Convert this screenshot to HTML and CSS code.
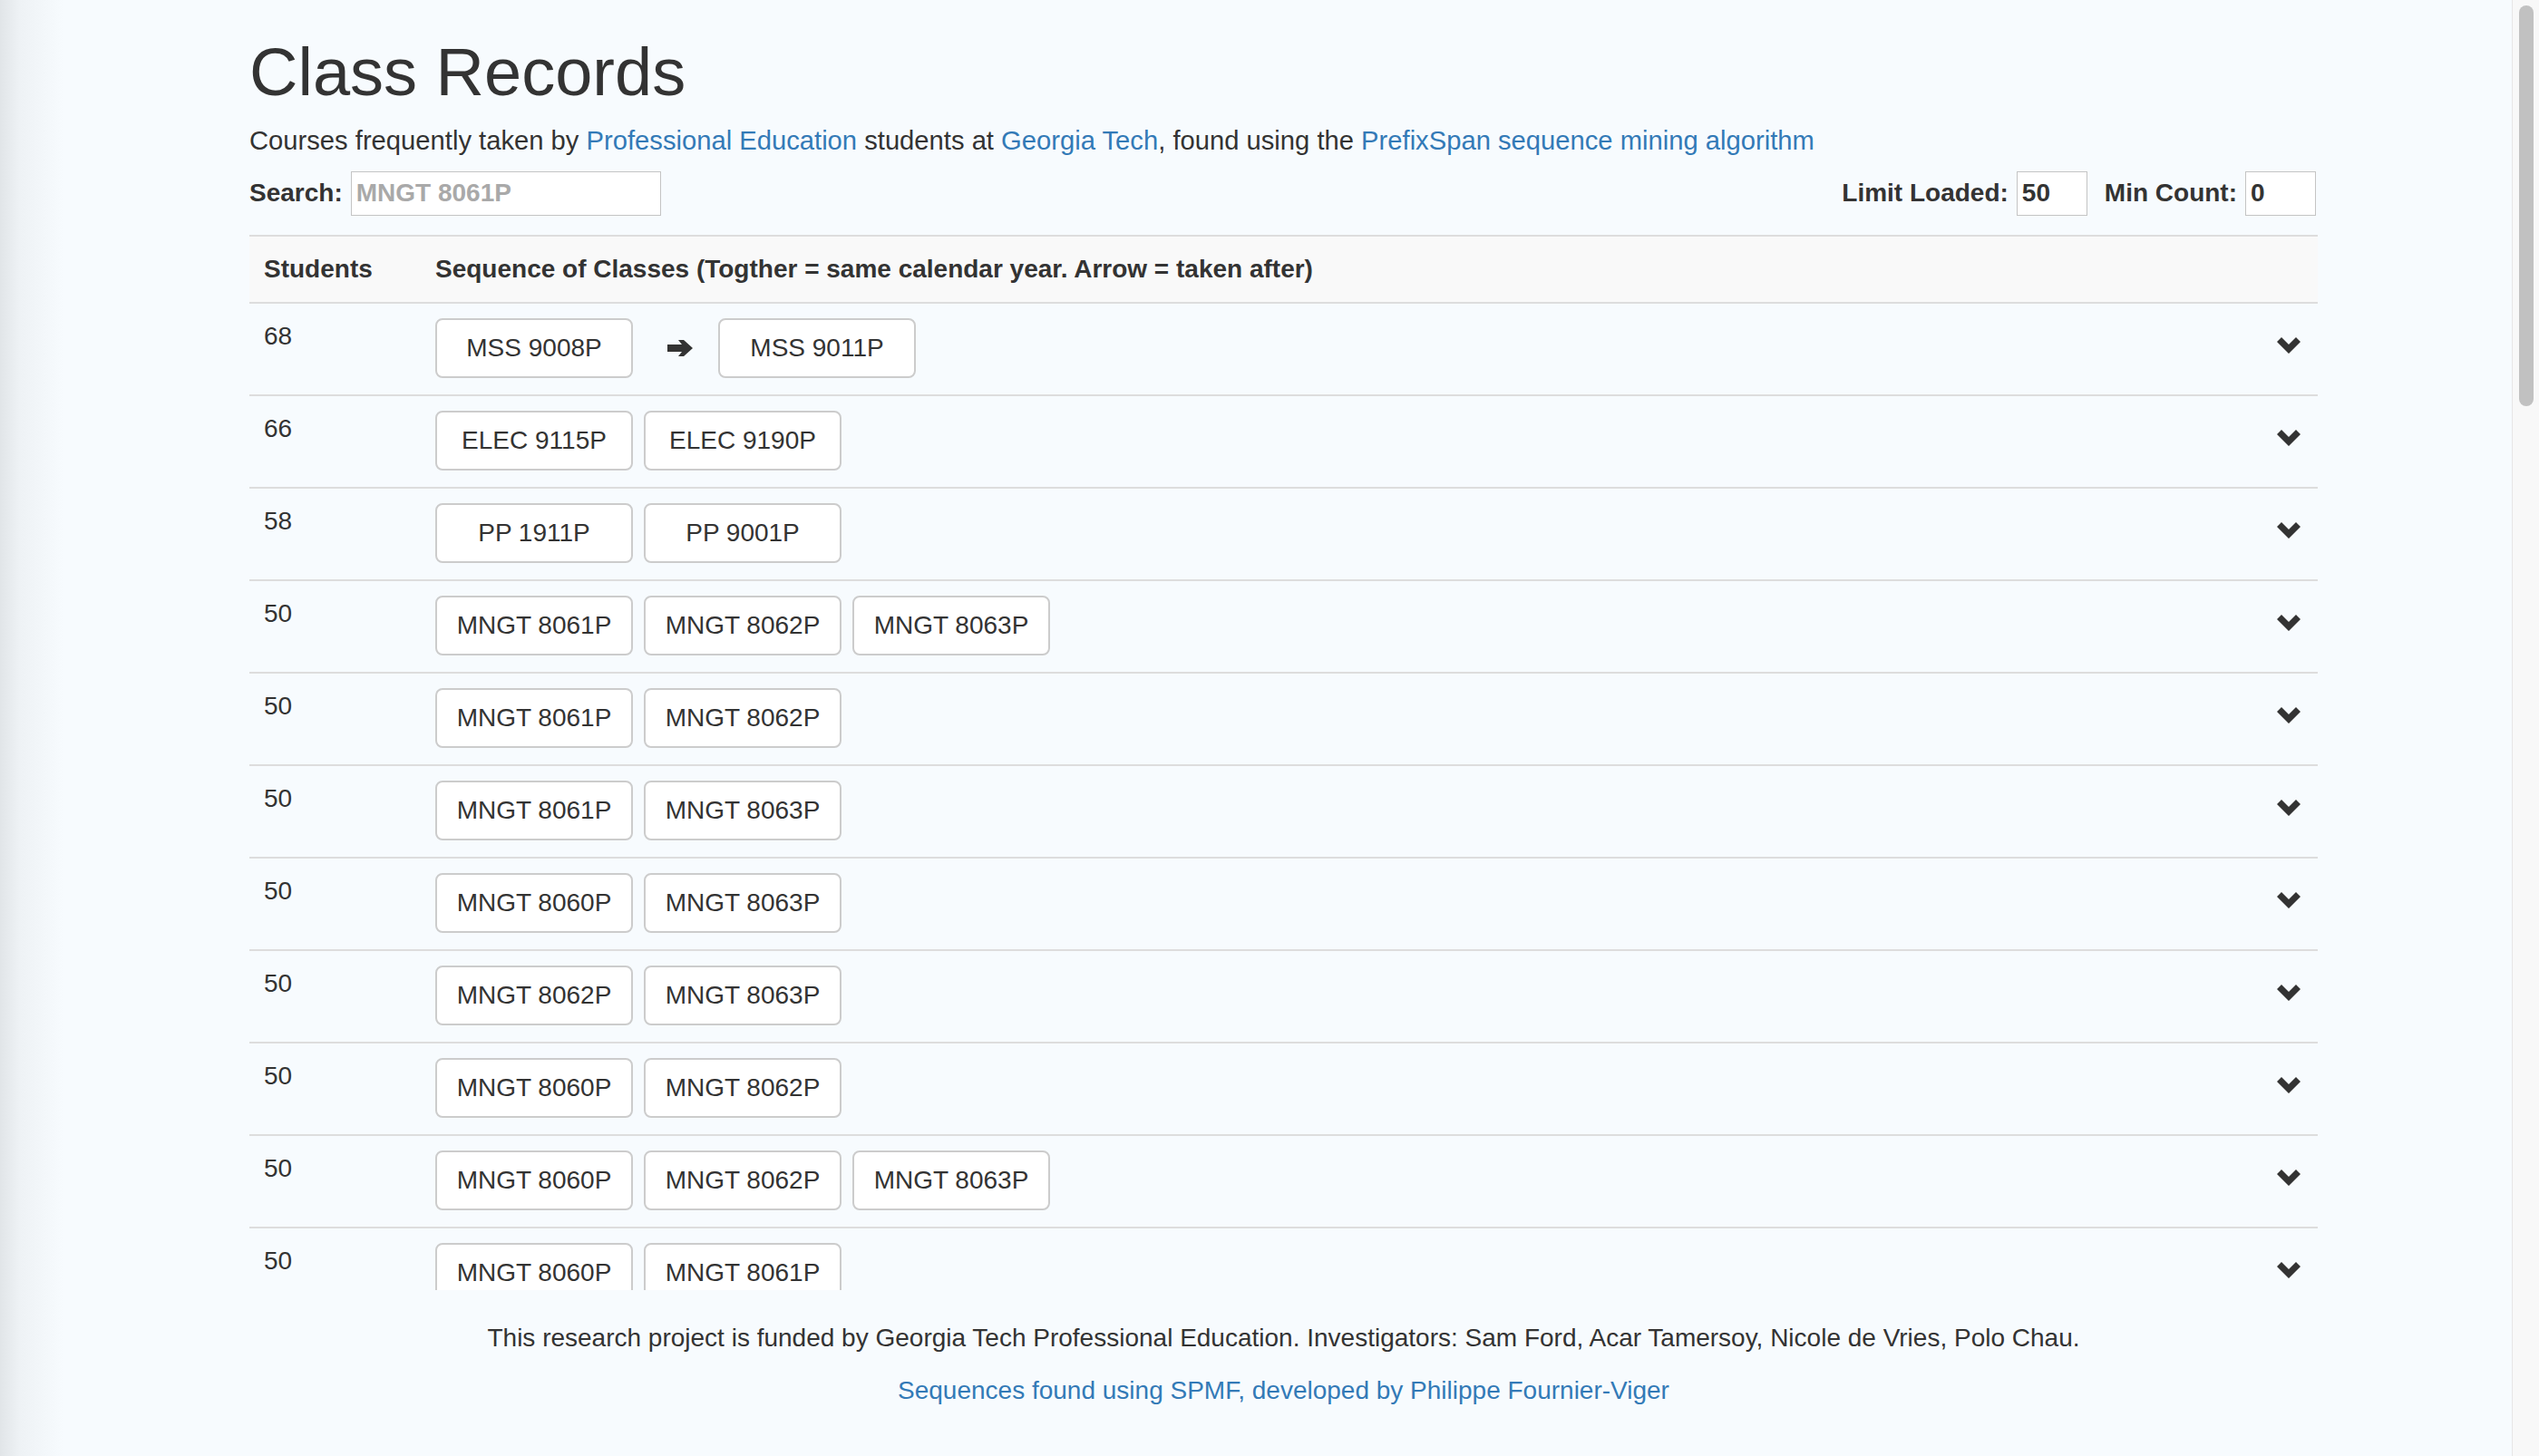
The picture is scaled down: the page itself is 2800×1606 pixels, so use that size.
FILE: index.html
```html
<!DOCTYPE html>
<html lang="en">
<head>
<meta charset="utf-8">
<title>Class Records</title>
<link rel="stylesheet" href="styles.css">
</head>
<body>
<div class="page">
  <main class="main">
    <div class="container">
      <h1 class="title">Class Records</h1>
      <p class="lead-text">Courses frequently taken by <a href="#">Professional Education</a> students at <a href="#">Georgia Tech</a>, found using the <a href="#">PrefixSpan sequence mining algorithm</a></p>
      <div class="controls">
        <label class="field"><span class="field-label">Search:</span><input class="input input-search" type="text" placeholder="MNGT 8061P"></label>
        <div class="controls-right">
          <label class="field"><span class="field-label">Limit Loaded:</span><input class="input input-small" type="text" value="50"></label>
          <label class="field field-last"><span class="field-label">Min Count:</span><input class="input input-small" type="text" value="0"></label>
        </div>
      </div>
      <div class="table-wrap">
        <table class="records">
          <colgroup>
            <col class="col-count">
            <col class="col-seq">
            <col class="col-toggle">
          </colgroup>
          <thead>
            <tr>
              <th>Students</th>
              <th>Sequence of Classes (Togther = same calendar year. Arrow = taken after)</th>
              <th></th>
            </tr>
          </thead>
          <tbody>
            <tr>
              <td class="count">68</td>
              <td><div class="seq"><span class="chip">MSS 9008P</span><svg class="arrow" width="28" height="18" viewBox="0 0 28 18"><path d="M0 5H16L12 0H18L28 9L18 18H12L16 13H0Z"/></svg><span class="chip">MSS 9011P</span></div></td>
              <td class="toggle"><svg class="chev" width="26" height="18" viewBox="0 0 26 18"><polygon points="0,5 5,0 13,8 21,0 26,5 13,18"/></svg></td>
            </tr>
            <tr>
              <td class="count">66</td>
              <td><div class="seq"><span class="chip">ELEC 9115P</span><span class="chip">ELEC 9190P</span></div></td>
              <td class="toggle"><svg class="chev" width="26" height="18" viewBox="0 0 26 18"><polygon points="0,5 5,0 13,8 21,0 26,5 13,18"/></svg></td>
            </tr>
            <tr>
              <td class="count">58</td>
              <td><div class="seq"><span class="chip">PP 1911P</span><span class="chip">PP 9001P</span></div></td>
              <td class="toggle"><svg class="chev" width="26" height="18" viewBox="0 0 26 18"><polygon points="0,5 5,0 13,8 21,0 26,5 13,18"/></svg></td>
            </tr>
            <tr>
              <td class="count">50</td>
              <td><div class="seq"><span class="chip">MNGT 8061P</span><span class="chip">MNGT 8062P</span><span class="chip">MNGT 8063P</span></div></td>
              <td class="toggle"><svg class="chev" width="26" height="18" viewBox="0 0 26 18"><polygon points="0,5 5,0 13,8 21,0 26,5 13,18"/></svg></td>
            </tr>
            <tr>
              <td class="count">50</td>
              <td><div class="seq"><span class="chip">MNGT 8061P</span><span class="chip">MNGT 8062P</span></div></td>
              <td class="toggle"><svg class="chev" width="26" height="18" viewBox="0 0 26 18"><polygon points="0,5 5,0 13,8 21,0 26,5 13,18"/></svg></td>
            </tr>
            <tr>
              <td class="count">50</td>
              <td><div class="seq"><span class="chip">MNGT 8061P</span><span class="chip">MNGT 8063P</span></div></td>
              <td class="toggle"><svg class="chev" width="26" height="18" viewBox="0 0 26 18"><polygon points="0,5 5,0 13,8 21,0 26,5 13,18"/></svg></td>
            </tr>
            <tr>
              <td class="count">50</td>
              <td><div class="seq"><span class="chip">MNGT 8060P</span><span class="chip">MNGT 8063P</span></div></td>
              <td class="toggle"><svg class="chev" width="26" height="18" viewBox="0 0 26 18"><polygon points="0,5 5,0 13,8 21,0 26,5 13,18"/></svg></td>
            </tr>
            <tr>
              <td class="count">50</td>
              <td><div class="seq"><span class="chip">MNGT 8062P</span><span class="chip">MNGT 8063P</span></div></td>
              <td class="toggle"><svg class="chev" width="26" height="18" viewBox="0 0 26 18"><polygon points="0,5 5,0 13,8 21,0 26,5 13,18"/></svg></td>
            </tr>
            <tr>
              <td class="count">50</td>
              <td><div class="seq"><span class="chip">MNGT 8060P</span><span class="chip">MNGT 8062P</span></div></td>
              <td class="toggle"><svg class="chev" width="26" height="18" viewBox="0 0 26 18"><polygon points="0,5 5,0 13,8 21,0 26,5 13,18"/></svg></td>
            </tr>
            <tr>
              <td class="count">50</td>
              <td><div class="seq"><span class="chip">MNGT 8060P</span><span class="chip">MNGT 8062P</span><span class="chip">MNGT 8063P</span></div></td>
              <td class="toggle"><svg class="chev" width="26" height="18" viewBox="0 0 26 18"><polygon points="0,5 5,0 13,8 21,0 26,5 13,18"/></svg></td>
            </tr>
            <tr>
              <td class="count">50</td>
              <td><div class="seq"><span class="chip">MNGT 8060P</span><span class="chip">MNGT 8061P</span></div></td>
              <td class="toggle"><svg class="chev" width="26" height="18" viewBox="0 0 26 18"><polygon points="0,5 5,0 13,8 21,0 26,5 13,18"/></svg></td>
            </tr>
            <tr>
              <td class="count">50</td>
              <td><div class="seq"><span class="chip">MNGT 8060P</span><span class="chip">MNGT 8061P</span><span class="chip">MNGT 8062P</span></div></td>
              <td class="toggle"><svg class="chev" width="26" height="18" viewBox="0 0 26 18"><polygon points="0,5 5,0 13,8 21,0 26,5 13,18"/></svg></td>
            </tr>
          </tbody>
        </table>
      </div>
      <footer class="footer">
        <p class="footer-text">This research project is funded by Georgia Tech Professional Education. Investigators: Sam Ford, Acar Tamersoy, Nicole de Vries, Polo Chau.</p>
        <p class="footer-link"><a href="#">Sequences found using SPMF, developed by Philippe Fournier-Viger</a></p>
      </footer>
    </div>
  </main>
  <div class="scrollbar"><div class="scrollbar-thumb"></div></div>
</div>
</body>
</html>
```

FILE: styles.css
```css
* {
  box-sizing: border-box;
}

html, body {
  margin: 0;
  padding: 0;
  height: 1606px;
  overflow: hidden;
}

body {
  font-family: "Liberation Sans", Arial, sans-serif;
  font-size: 28px;
  line-height: 40px;
  color: #333333;
  background: #f7fbfe;
}

a {
  color: #337ab7;
  text-decoration: none;
}

.page {
  display: flex;
  height: 1606px;
  background: linear-gradient(to right, #e1e5e8 0px, #eef2f5 22px, #f7fbfe 70px);
}

.main {
  flex: 1;
  min-width: 0;
}

.container {
  width: 2281px;
  margin-left: 275px;
}

.title {
  margin: 40px 0 0;
  font-size: 74px;
  line-height: 80px;
  font-weight: 500;
  color: #333333;
}

.lead-text {
  margin: 15px 0 0;
  font-size: 29.2px;
}

.controls {
  display: flex;
  justify-content: space-between;
  align-items: flex-start;
  margin-top: 11px;
}

.controls-right {
  display: flex;
  gap: 19px;
}

.field {
  display: flex;
  align-items: flex-start;
  gap: 9px;
  font-weight: 700;
}

.field-last {
  margin-right: 2px;
}

.field-label {
  line-height: 40px;
  padding-top: 7px;
}

.input {
  margin-top: 3px;
  height: 49px;
  border: 1px solid #c4c4c4;
  background: #ffffff;
  padding: 7px 5px 8px;
  font-family: "Liberation Sans", Arial, sans-serif;
  font-size: 28px;
  line-height: 32px;
  font-weight: 700;
  color: #333333;
  outline: none;
  border-radius: 0;
}

.input::placeholder {
  color: #a9a9a9;
  opacity: 1;
}

.input-search {
  width: 342px;
}

.input-small {
  width: 78px;
}

.table-wrap {
  margin-top: 21px;
  height: 1164px;
  overflow: hidden;
}

.records {
  width: 100%;
  table-layout: fixed;
  border-collapse: collapse;
  border-spacing: 0;
}

.col-count {
  width: 189px;
}

.col-toggle {
  width: 61px;
}

.records thead tr {
  background: #f9f9f9;
}

.records th {
  text-align: left;
  font-weight: 700;
  padding: 16px;
  line-height: 40px;
  border-top: 2px solid #dddddd;
  border-bottom: 2px solid #dddddd;
  white-space: nowrap;
}

.records td {
  padding: 16px 16px 18px;
  vertical-align: top;
  border-bottom: 2px solid #dddddd;
}

.seq {
  display: flex;
  align-items: center;
  gap: 12px;
}

.chip {
  display: inline-flex;
  align-items: center;
  justify-content: center;
  width: 218px;
  height: 66px;
  background: #ffffff;
  border: 2px solid #cccccc;
  border-radius: 8px;
  font-size: 28px;
  color: #333333;
  white-space: nowrap;
}

.arrow {
  display: block;
  fill: #333333;
  margin: 0 16px 0 26px;
}

.records td.toggle {
  padding: 37px 19px 0 16px;
}

.chev {
  display: block;
  fill: #333333;
}

.footer {
  text-align: center;
}

.footer-text {
  margin: 33px 0 0;
}

.footer-link {
  margin: 18px 0 0;
}

.scrollbar {
  width: 30px;
  flex: none;
  height: 1606px;
  background: #f8f8f8;
  border-left: 1px solid #e6e6e6;
  padding: 6px 0 0 7px;
}

.scrollbar-thumb {
  width: 16px;
  height: 442px;
  border-radius: 8px;
  background: #c1c1c1;
}
```
